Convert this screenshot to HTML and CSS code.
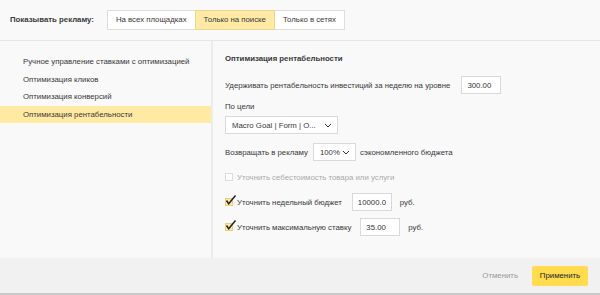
FILE: index.html
```html
<!DOCTYPE html>
<html lang="ru">
<head>
    <meta charset="UTF-8">
    <title>Стратегия</title>
    <link rel="stylesheet" href="styles.css">
</head>
<body>
    <div class="page">
        <header class="topbar">
            <span class="topbar-label">Показывать рекламу:</span>
            <div class="segments">
                <span class="segment">На всех площадках</span>
                <span class="segment active">Только на поиске</span>
                <span class="segment">Только в сетях</span>
            </div>
        </header>

        <div class="main">
            <ul class="strategies">
                <li>Ручное управление ставками с оптимизацией</li>
                <li>Оптимизация кликов</li>
                <li>Оптимизация конверсий</li>
                <li class="selected">Оптимизация рентабельности</li>
            </ul>

            <div class="settings">
                <div class="title">Оптимизация рентабельности</div>

                <div class="row row-roi">
                    <span>Удерживать рентабельность инвестиций за неделю на уровне</span>
                    <input class="field" type="text" value="300.00">
                </div>

                <div class="goal-label">По цели</div>
                <div class="select select-goal">
                    <span>Macro Goal | Form | O...</span>
                    <svg class="chevron" width="8" height="5" viewBox="0 0 8 5"><path d="M1 1l3 3 3-3" fill="none" stroke="#333" stroke-width="1"/></svg>
                </div>

                <div class="row row-return">
                    <span>Возвращать в рекламу</span>
                    <div class="select select-percent">
                        <span>100%</span>
                        <svg class="chevron" width="8" height="5" viewBox="0 0 8 5"><path d="M1 1l3 3 3-3" fill="none" stroke="#333" stroke-width="1"/></svg>
                    </div>
                    <span>сэкономленного бюджета</span>
                </div>

                <div class="row check-row disabled">
                    <span class="box"></span>
                    <span>Уточнить себестоимость товара или услуги</span>
                </div>

                <div class="row check-row">
                    <span class="box checked">
                        <svg width="12" height="12" viewBox="0 0 12 12"><path d="M1.5 5.5l2.2 3.2L10.5 0.5" fill="none" stroke="#222" stroke-width="1.5"/></svg>
                    </span>
                    <span class="check-text budget-text">Уточнить недельный бюджет</span>
                    <input class="field" type="text" value="10000.00">
                    <span class="unit">руб.</span>
                </div>

                <div class="row check-row">
                    <span class="box checked">
                        <svg width="12" height="12" viewBox="0 0 12 12"><path d="M1.5 5.5l2.2 3.2L10.5 0.5" fill="none" stroke="#222" stroke-width="1.5"/></svg>
                    </span>
                    <span class="check-text bid-text">Уточнить максимальную ставку</span>
                    <input class="field" type="text" value="35.00">
                    <span class="unit">руб.</span>
                </div>
            </div>
        </div>

        <footer class="actions">
            <span class="cancel">Отменить</span>
            <span class="apply">Применить</span>
        </footer>
    </div>
</body>
</html>
```

FILE: styles.css
```css
* {
    margin: 0;
    padding: 0;
    box-sizing: border-box;
}

body {
    font-family: "Liberation Sans", Arial, sans-serif;
    font-size: 7.8px;
    color: #383838;
    background: #f9f9f9;
}

.page {
    width: 600px;
    height: 295px;
    display: flex;
    flex-direction: column;
}

.topbar {
    height: 41px;
    display: flex;
    align-items: center;
    padding-left: 10px;
    padding-bottom: 1px;
    border-bottom: 1px solid #e6e6e6;
}

.topbar-label {
    font-weight: bold;
    margin-right: 14px;
}

.segments {
    display: flex;
}

.segment {
    height: 20px;
    display: flex;
    align-items: center;
    padding: 0 8px;
    background: #fff;
    border: 1px solid #dedede;
    margin-left: -1px;
}

.segment.active {
    background: #feeaa4;
    border-color: #ecd68e;
    position: relative;
}

.main {
    flex: 1;
    display: flex;
}

.strategies {
    width: 213px;
    list-style: none;
    padding-top: 12px;
    border-right: 2px solid #ececec;
}

.strategies li {
    height: 17.5px;
    line-height: 17.5px;
    padding-left: 23px;
}

.strategies li.selected {
    background: #feeaa2;
}

.settings {
    flex: 1;
    padding: 13px 0 0 12px;
    display: flex;
    flex-direction: column;
    align-items: flex-start;
}

.title {
    font-weight: bold;
    height: 10px;
    line-height: 10px;
}

.row {
    display: flex;
    align-items: center;
    height: 18px;
    margin-top: 7px;
}

.row-roi {
    margin-top: 12px;
}

.row-roi .field {
    margin-left: 11px;
}

.field {
    width: 40px;
    height: 18px;
    border: 1px solid #d9d9d9;
    background: #fff;
    font: inherit;
    color: #333;
    padding: 0 5px;
    outline: none;
}

.goal-label {
    margin-top: 8px;
    height: 10px;
    line-height: 10px;
}

.select {
    height: 18px;
    display: flex;
    align-items: center;
    justify-content: space-between;
    background: #fff;
    border: 1px solid #d9d9d9;
    padding: 0 5px 0 6px;
}

.select-goal {
    width: 113px;
    margin-top: 4px;
}

.row-return {
    margin-top: 9px;
}

.select-percent {
    width: 43px;
    margin: 0 4px 0 5px;
}

.chevron {
    display: block;
}

.box {
    width: 8px;
    height: 8px;
    border: 1px solid #ccc;
    background: #fff;
    margin-right: 4px;
    position: relative;
}

.box.checked {
    background: #fde9a0;
    border-color: #e4cf86;
}

.box svg {
    position: absolute;
    left: -1px;
    top: -4px;
}

.disabled {
    color: #aaa;
}

.disabled .box {
    border-color: #ddd;
}

.budget-text {
    margin-right: 10px;
}

.bid-text {
    margin-right: 9px;
}

.unit {
    margin-left: 8px;
}

.actions {
    height: 37px;
    background: #f1f1f1;
    border-bottom: 2px solid #c9c9c9;
    display: flex;
    align-items: center;
    justify-content: flex-end;
    padding-right: 12px;
}

.cancel {
    color: #999;
    margin-right: 14px;
}

.apply {
    width: 56px;
    height: 20px;
    display: flex;
    align-items: center;
    justify-content: center;
    background: #ffdb4d;
    border-radius: 2px;
    color: #222;
}
```
